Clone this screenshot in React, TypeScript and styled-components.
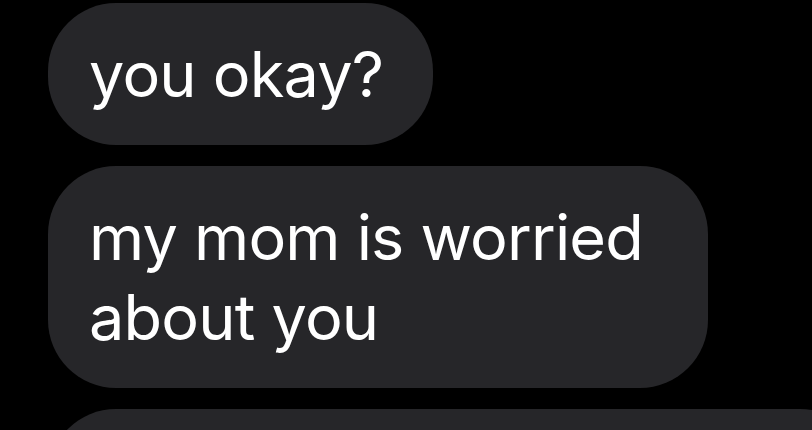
import styled, { createGlobalStyle } from 'styled-components';

const GlobalStyle = createGlobalStyle`
  html, body {
    margin: 0;
    padding: 0;
    background: #000000;
    overflow: hidden;
  }
`;

const Thread = styled.div`
  width: 812px;
  height: 430px;
  box-sizing: border-box;
  padding: 3px 0 0 48px;
  display: flex;
  flex-direction: column;
  align-items: flex-start;
  gap: 21px;
  overflow: hidden;
  background: #000000;
`;

const Bubble = styled.div<{ $wide?: boolean }>`
  box-sizing: border-box;
  max-width: ${(p) => (p.$wide ? '820px' : '660px')};
  width: ${(p) => (p.$wide ? '820px' : 'auto')};
  min-height: 142px;
  flex-shrink: 0;
  padding: 31px 50px 31px 41px;
  border-radius: 68px;
  background: #262629;
  color: #ffffff;
  font-family: Inter, 'Liberation Sans', sans-serif;
  font-size: 63px;
  line-height: 80px;
  letter-spacing: -0.8px;
`;

const messages = ['you okay?', 'my mom is worried about you'];

export default function App() {
  return (
    <>
      <GlobalStyle />
      <Thread>
        {messages.map((text) => (
          <Bubble key={text}>{text}</Bubble>
        ))}
        <Bubble $wide />
      </Thread>
    </>
  );
}
